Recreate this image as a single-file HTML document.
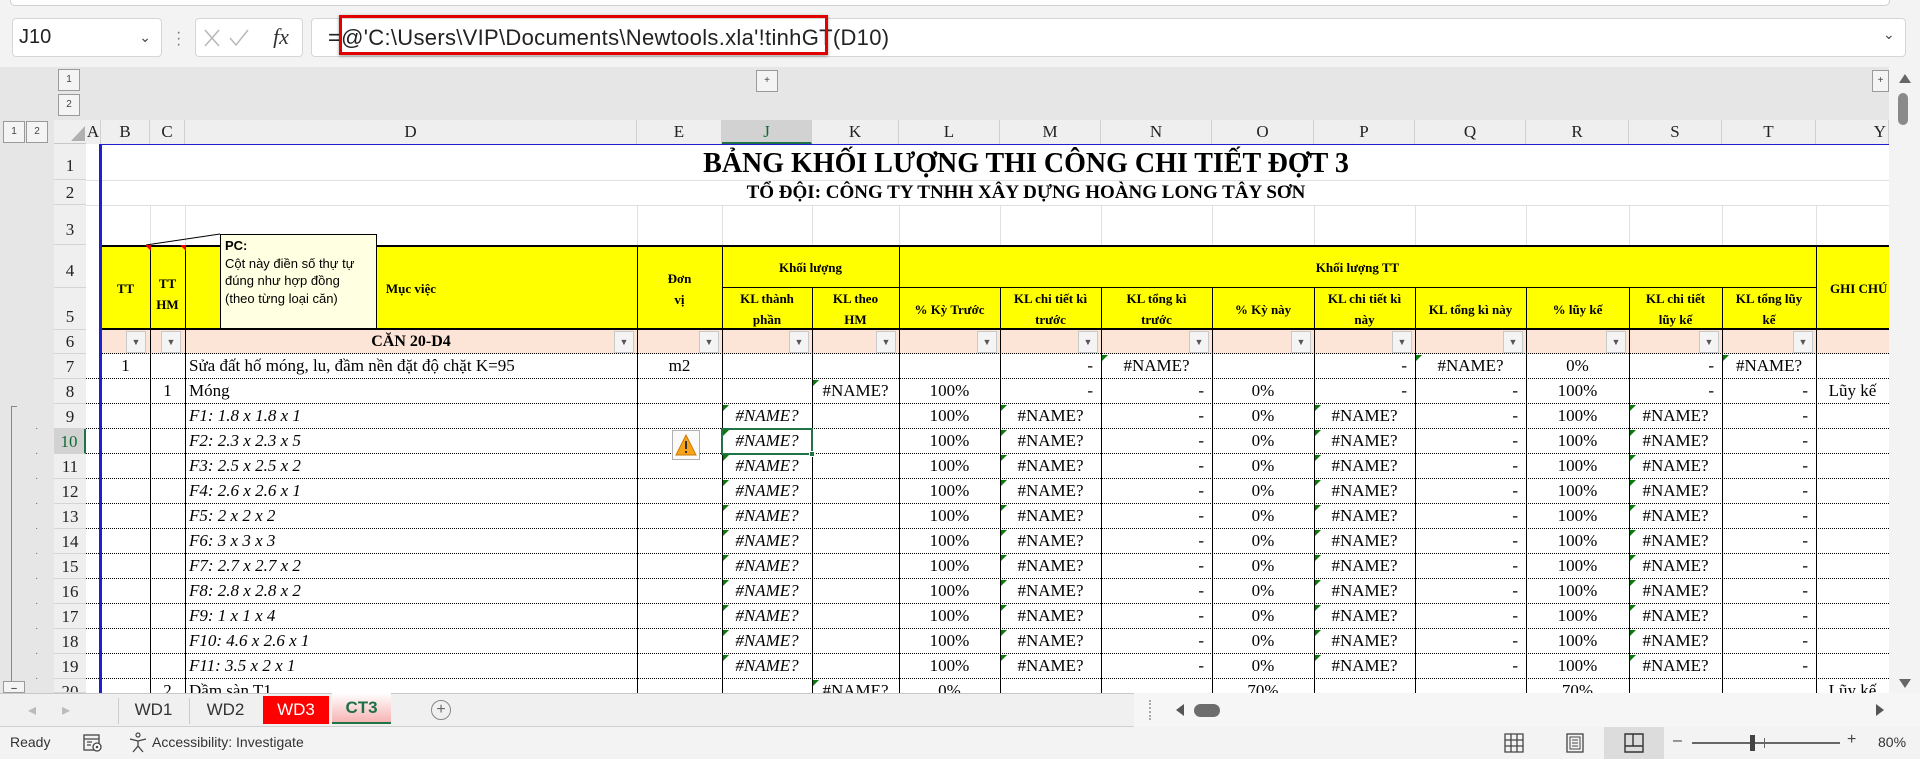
<!DOCTYPE html>
<html><head><meta charset="utf-8"><style>
*{box-sizing:border-box;margin:0;padding:0}
body{width:1920px;height:759px;overflow:hidden;background:#f3f3f3;position:relative;font-family:"Liberation Sans",sans-serif}
.a{position:absolute}
.sheet{position:absolute;left:86px;top:144px;width:1803px;height:549px;overflow:hidden;background:#fff}
.s{font-family:"Liberation Serif",serif;color:#000}
.r{position:absolute;left:-86px;width:1889px;height:25px;border-bottom:1px dotted #000;font-family:"Liberation Serif",serif;font-size:17px}
.c{position:absolute;top:0;height:24px;line-height:24px;text-align:center;white-space:nowrap}
.B{left:101px;width:49px}.C{left:150px;width:35px}.D{left:189px;width:448px;text-align:left}.E{left:637px;width:85px}
.J{left:722px;width:90px}.K{left:812px;width:87px}.L{left:899px;width:101px}.M{left:1000px;width:101px}
.N{left:1101px;width:111px}.O{left:1212px;width:102px}.P{left:1314px;width:101px}.Q{left:1415px;width:111px}
.R{left:1526px;width:103px}.S{left:1629px;width:93px}.T{left:1722px;width:94px}.Y{left:1816px;width:73px}
.rt{text-align:right;padding-right:8px}
.t::before{content:"";position:absolute;left:1px;top:1px;border-top:6px solid #0a7a0a;border-right:6px solid transparent}
.vl{position:absolute;width:1px;background:#000}
.rn{position:absolute;left:54px;width:32px;text-align:center;font-family:"Liberation Serif",serif;font-size:17px;color:#222;border-bottom:1px solid #d4d4d4;background:#efefef}
.ch{position:absolute;top:120px;height:24px;line-height:24px;text-align:center;font-family:"Liberation Serif",serif;font-size:17px;color:#222;border-right:1px solid #d0d0d0;background:#efefef}
.h{position:absolute;font-family:"Liberation Serif",serif;font-weight:bold;font-size:13px;text-align:center;display:flex;align-items:center;justify-content:center;line-height:21px}
.dd{position:absolute;top:2px;width:20px;height:22px;background:#f4f4f4;border:1px solid #c8c8c8;font-size:9px;line-height:20px;text-align:center;color:#555}
.ob{position:absolute;width:22px;height:22px;border:1px solid #9a9a9a;background:#f4f4f4;font-size:10px;text-align:center;line-height:20px;color:#444}
</style></head><body>
<div class="a" style="left:10px;top:-6px;width:1880px;height:12px;background:#fff;border:1px solid #d0d0d0;border-radius:5px"></div>
<div class="a" style="left:12px;top:18px;width:150px;height:39px;background:#fff;border:1px solid #d6d6d6;border-radius:4px;font-size:20px;line-height:37px;padding-left:6px;color:#222">J10<span class="a" style="right:10px;top:0;font-size:14px;color:#444">&#8964;</span></div>
<div class="a" style="left:176px;top:30px;color:#777;font-size:16px;line-height:6px">·<br>·<br>·</div>
<div class="a" style="left:195px;top:18px;width:108px;height:39px;background:#fff;border:1px solid #d6d6d6;border-radius:4px"></div>
<svg class="a" style="left:203px;top:28px" width="95" height="20"><path d="M2 2 L16 18 M16 2 L2 18" stroke="#b8b8b8" stroke-width="1.5"/><path d="M27 10 L33 17 L45 2" stroke="#b8b8b8" stroke-width="1.5" fill="none"/><text x="70" y="16" font-family="Liberation Serif" font-style="italic" font-size="22" fill="#333">fx</text></svg>
<div class="a" style="left:311px;top:18px;width:1595px;height:39px;background:#fff;border:1px solid #d6d6d6;border-radius:4px"></div>
<div class="a" style="left:328px;top:25px;font-size:22px;color:#222;white-space:nowrap;letter-spacing:0.3px">=@'C:\Users\VIP\Documents\Newtools.xla'!tinhGT(D10)</div>
<div class="a" style="left:339px;top:15px;width:489px;height:40px;border:3px solid #e00000;box-shadow:0 1px 3px rgba(0,0,0,.4)"></div>
<div class="a" style="left:1883px;top:26px;font-size:14px;color:#444">&#8964;</div>
<div class="a" style="left:0;top:67px;width:1889px;height:53px;background:#e6e6e6"></div>
<div class="a" style="left:0;top:120px;width:54px;height:573px;background:#e6e6e6"></div>
<div class="ob" style="left:58px;top:69px">1</div><div class="ob" style="left:58px;top:94px">2</div>
<div class="ob" style="left:756px;top:70px">+</div><div class="ob" style="left:1872px;top:70px;width:17px">+</div>
<div class="ob" style="left:3px;top:121px">1</div><div class="ob" style="left:26px;top:121px">2</div>
<div class="a" style="left:54px;top:120px;width:1835px;height:24px;background:#efefef;border-bottom:1px solid #c8c8c8"></div>
<svg class="a" style="left:70px;top:124px" width="16" height="18"><path d="M15 2 L15 17 L1 17 Z" fill="#b0b0b0"/></svg>
<div class="ch" style="left:86px;width:15px">A</div><div class="ch" style="left:101px;width:49px">B</div><div class="ch" style="left:150px;width:35px">C</div>
<div class="ch" style="left:185px;width:452px">D</div><div class="ch" style="left:637px;width:85px">E</div>
<div class="ch" style="left:722px;width:90px;background:#d2d2d2;border-bottom:2px solid #217346;color:#106b35">J</div>
<div class="ch" style="left:812px;width:87px">K</div><div class="ch" style="left:899px;width:101px">L</div><div class="ch" style="left:1000px;width:101px">M</div>
<div class="ch" style="left:1101px;width:111px">N</div><div class="ch" style="left:1212px;width:102px">O</div><div class="ch" style="left:1314px;width:101px">P</div>
<div class="ch" style="left:1415px;width:111px">Q</div><div class="ch" style="left:1526px;width:103px">R</div><div class="ch" style="left:1629px;width:93px">S</div>
<div class="ch" style="left:1722px;width:94px">T</div><div class="ch" style="left:1816px;width:73px;text-align:right;padding-right:2px">Y</div>
<div class="rn" style="top:144px;height:36px;line-height:44px">1</div>
<div class="rn" style="top:180px;height:25px;line-height:25px">2</div>
<div class="rn" style="top:205px;height:40px;line-height:50px">3</div>
<div class="rn" style="top:245px;height:43px;line-height:52px">4</div>
<div class="rn" style="top:288px;height:42px;line-height:58px">5</div>
<div class="rn" style="top:330px;height:24px;line-height:24px">6</div>
<div class="rn" style="top:354px;height:25px;line-height:25px">7</div>
<div class="rn" style="top:379px;height:25px;line-height:25px">8</div>
<div class="rn" style="top:404px;height:25px;line-height:25px">9</div>
<div class="rn" style="top:429px;height:25px;line-height:25px;background:#d2d2d2;color:#106b35;border-right:2px solid #217346">10</div>
<div class="rn" style="top:454px;height:25px;line-height:25px">11</div>
<div class="rn" style="top:479px;height:25px;line-height:25px">12</div>
<div class="rn" style="top:504px;height:25px;line-height:25px">13</div>
<div class="rn" style="top:529px;height:25px;line-height:25px">14</div>
<div class="rn" style="top:554px;height:25px;line-height:25px">15</div>
<div class="rn" style="top:579px;height:25px;line-height:25px">16</div>
<div class="rn" style="top:604px;height:25px;line-height:25px">17</div>
<div class="rn" style="top:629px;height:25px;line-height:25px">18</div>
<div class="rn" style="top:654px;height:25px;line-height:25px">19</div>
<div class="rn" style="top:679px;height:14px;line-height:25px;overflow:hidden">20</div>
<div class="a" style="left:11px;top:406px;width:1px;height:275px;background:#888"></div>
<div class="a" style="left:11px;top:406px;width:6px;height:1px;background:#888"></div>
<div class="a" style="left:35px;top:416px;color:#666;font-size:10px;line-height:25px">·<br>·<br>·<br>·<br>·<br>·<br>·<br>·<br>·<br>·<br>·</div>
<div class="a" style="left:3px;top:681px;width:22px;height:12px;border:1px solid #9a9a9a;background:#f4f4f4;font-size:10px;text-align:center;line-height:14px;overflow:hidden">–</div>

<div class="sheet">
 <div class="a" style="left:0;top:36px;width:1803px;height:1px;background:#e0e0e0"></div>
 <div class="a" style="left:0;top:61px;width:1803px;height:1px;background:#e0e0e0"></div>
 <div class="a" style="left:64px;top:61px;width:1px;height:40px;background:#e0e0e0"></div>
 <div class="a" style="left:99px;top:61px;width:1px;height:40px;background:#e0e0e0"></div>
 <div class="a" style="left:551px;top:61px;width:1px;height:40px;background:#e0e0e0"></div>
 <div class="a" style="left:636px;top:61px;width:1px;height:40px;background:#e0e0e0"></div>
 <div class="a" style="left:726px;top:61px;width:1px;height:40px;background:#e0e0e0"></div>
 <div class="a" style="left:813px;top:61px;width:1px;height:40px;background:#e0e0e0"></div>
 <div class="a" style="left:914px;top:61px;width:1px;height:40px;background:#e0e0e0"></div>
 <div class="a" style="left:1015px;top:61px;width:1px;height:40px;background:#e0e0e0"></div>
 <div class="a" style="left:1126px;top:61px;width:1px;height:40px;background:#e0e0e0"></div>
 <div class="a" style="left:1228px;top:61px;width:1px;height:40px;background:#e0e0e0"></div>
 <div class="a" style="left:1329px;top:61px;width:1px;height:40px;background:#e0e0e0"></div>
 <div class="a" style="left:1440px;top:61px;width:1px;height:40px;background:#e0e0e0"></div>
 <div class="a" style="left:1543px;top:61px;width:1px;height:40px;background:#e0e0e0"></div>
 <div class="a" style="left:1636px;top:61px;width:1px;height:40px;background:#e0e0e0"></div>
 <div class="a" style="left:1730px;top:61px;width:1px;height:40px;background:#e0e0e0"></div>
 <div class="a s" style="left:0;top:0;width:1880px;height:36px;text-align:center;font-weight:bold;font-size:28px;line-height:40px;padding-left:0">BẢNG KHỐI LƯỢNG THI CÔNG CHI TIẾT ĐỢT 3</div>
 <div class="a s" style="left:0;top:36px;width:1880px;height:25px;text-align:center;font-weight:bold;font-size:19px;line-height:25px">TỔ ĐỘI: CÔNG TY TNHH XÂY DỰNG HOÀNG LONG TÂY SƠN</div>
 <div class="a" style="left:15px;top:101px;width:1790px;height:85px;background:#ffff00;border-top:2px solid #000;border-bottom:2px solid #000"></div>
 <div class="a" style="left:636px;top:143px;width:1094px;height:1px;background:#000"></div>
 <div class="a" style="left:15px;top:186px;width:1790px;height:24px;background:#fce4d6;border-bottom:1px dotted #000"></div>
</div>
<div class="h" style="left:101px;top:247px;width:49px;height:83px">TT</div>
<div class="h" style="left:150px;top:247px;width:35px;height:83px;padding-top:10px">TT<br>HM</div>
<div class="h" style="left:185px;top:247px;width:452px;height:83px">Mục việc</div>
<div class="h" style="left:637px;top:247px;width:85px;height:83px">Đơn<br>vị</div>
<div class="h" style="left:722px;top:247px;width:177px;height:41px">Khối lượng</div>
<div class="h" style="left:899px;top:247px;width:917px;height:41px">Khối lượng TT</div>
<div class="h" style="left:1816px;top:247px;width:90px;height:83px;justify-content:flex-start;padding-left:14px">GHI CHÚ</div>
<div class="h" style="left:722px;top:288px;width:90px;height:42px">KL thành<br>phần</div>
<div class="h" style="left:812px;top:288px;width:87px;height:42px">KL theo<br>HM</div>
<div class="h" style="left:899px;top:288px;width:101px;height:42px">% Kỳ Trước</div>
<div class="h" style="left:1000px;top:288px;width:101px;height:42px">KL chi tiết kì<br>trước</div>
<div class="h" style="left:1101px;top:288px;width:111px;height:42px">KL tổng kì<br>trước</div>
<div class="h" style="left:1212px;top:288px;width:102px;height:42px">% Kỳ này</div>
<div class="h" style="left:1314px;top:288px;width:101px;height:42px">KL chi tiết kì<br>này</div>
<div class="h" style="left:1415px;top:288px;width:111px;height:42px">KL tổng kì này</div>
<div class="h" style="left:1526px;top:288px;width:103px;height:42px">% lũy kế</div>
<div class="h" style="left:1629px;top:288px;width:93px;height:42px">KL chi tiết<br>lũy kế</div>
<div class="h" style="left:1722px;top:288px;width:94px;height:42px">KL tổng lũy<br>kế</div>
<div class="a" style="left:1889px;top:247px;width:31px;height:83px;background:#f3f3f3"></div>
<div class="a s" style="left:185px;top:330px;width:452px;height:24px;line-height:24px;text-align:center;font-weight:bold;font-size:16px">CĂN 20-D4</div>
<div class="dd" style="left:126px;top:331px">▼</div><div class="dd" style="left:161px;top:331px">▼</div><div class="dd" style="left:614px;top:331px">▼</div>
<div class="dd" style="left:699px;top:331px">▼</div><div class="dd" style="left:789px;top:331px">▼</div><div class="dd" style="left:876px;top:331px">▼</div>
<div class="dd" style="left:977px;top:331px">▼</div><div class="dd" style="left:1078px;top:331px">▼</div><div class="dd" style="left:1189px;top:331px">▼</div>
<div class="dd" style="left:1291px;top:331px">▼</div><div class="dd" style="left:1392px;top:331px">▼</div><div class="dd" style="left:1503px;top:331px">▼</div>
<div class="dd" style="left:1606px;top:331px">▼</div><div class="dd" style="left:1699px;top:331px">▼</div><div class="dd" style="left:1793px;top:331px">▼</div>
<div class="a" style="left:86px;top:354px;width:1803px;height:339px;overflow:hidden">
<div style="position:absolute;left:0;top:0">
<div class="r" style="top:0"><span class="c B">1</span><span class="c D">Sửa đất hố móng, lu, đầm nền đặt độ chặt K=95</span><span class="c E">m2</span><span class="c M rt">-</span><span class="c N t">#NAME?</span><span class="c P rt">-</span><span class="c Q t">#NAME?</span><span class="c R">0%</span><span class="c S rt">-</span><span class="c T t">#NAME?</span></div>
<div class="r" style="top:25px"><span class="c C">1</span><span class="c D">Móng</span><span class="c K t">#NAME?</span><span class="c L">100%</span><span class="c M rt">-</span><span class="c N rt">-</span><span class="c O">0%</span><span class="c P rt">-</span><span class="c Q rt">-</span><span class="c R">100%</span><span class="c S rt">-</span><span class="c T rt">-</span><span class="c Y">Lũy kế</span></div>
<div class="r" style="top:50px"><i class="c D">F1: 1.8 x 1.8 x 1</i><i class="c J t">#NAME?</i><span class="c L">100%</span><span class="c M t">#NAME?</span><span class="c N rt">-</span><span class="c O">0%</span><span class="c P t">#NAME?</span><span class="c Q rt">-</span><span class="c R">100%</span><span class="c S t">#NAME?</span><span class="c T rt">-</span></div>
<div class="r" style="top:75px"><i class="c D">F2: 2.3 x 2.3 x 5</i><i class="c J t">#NAME?</i><span class="c L">100%</span><span class="c M t">#NAME?</span><span class="c N rt">-</span><span class="c O">0%</span><span class="c P t">#NAME?</span><span class="c Q rt">-</span><span class="c R">100%</span><span class="c S t">#NAME?</span><span class="c T rt">-</span></div>
<div class="r" style="top:100px"><i class="c D">F3: 2.5 x 2.5 x 2</i><i class="c J t">#NAME?</i><span class="c L">100%</span><span class="c M t">#NAME?</span><span class="c N rt">-</span><span class="c O">0%</span><span class="c P t">#NAME?</span><span class="c Q rt">-</span><span class="c R">100%</span><span class="c S t">#NAME?</span><span class="c T rt">-</span></div>
<div class="r" style="top:125px"><i class="c D">F4: 2.6 x 2.6 x 1</i><i class="c J t">#NAME?</i><span class="c L">100%</span><span class="c M t">#NAME?</span><span class="c N rt">-</span><span class="c O">0%</span><span class="c P t">#NAME?</span><span class="c Q rt">-</span><span class="c R">100%</span><span class="c S t">#NAME?</span><span class="c T rt">-</span></div>
<div class="r" style="top:150px"><i class="c D">F5: 2 x 2 x 2</i><i class="c J t">#NAME?</i><span class="c L">100%</span><span class="c M t">#NAME?</span><span class="c N rt">-</span><span class="c O">0%</span><span class="c P t">#NAME?</span><span class="c Q rt">-</span><span class="c R">100%</span><span class="c S t">#NAME?</span><span class="c T rt">-</span></div>
<div class="r" style="top:175px"><i class="c D">F6: 3 x 3 x 3</i><i class="c J t">#NAME?</i><span class="c L">100%</span><span class="c M t">#NAME?</span><span class="c N rt">-</span><span class="c O">0%</span><span class="c P t">#NAME?</span><span class="c Q rt">-</span><span class="c R">100%</span><span class="c S t">#NAME?</span><span class="c T rt">-</span></div>
<div class="r" style="top:200px"><i class="c D">F7: 2.7 x 2.7 x 2</i><i class="c J t">#NAME?</i><span class="c L">100%</span><span class="c M t">#NAME?</span><span class="c N rt">-</span><span class="c O">0%</span><span class="c P t">#NAME?</span><span class="c Q rt">-</span><span class="c R">100%</span><span class="c S t">#NAME?</span><span class="c T rt">-</span></div>
<div class="r" style="top:225px"><i class="c D">F8: 2.8 x 2.8 x 2</i><i class="c J t">#NAME?</i><span class="c L">100%</span><span class="c M t">#NAME?</span><span class="c N rt">-</span><span class="c O">0%</span><span class="c P t">#NAME?</span><span class="c Q rt">-</span><span class="c R">100%</span><span class="c S t">#NAME?</span><span class="c T rt">-</span></div>
<div class="r" style="top:250px"><i class="c D">F9: 1 x 1 x 4</i><i class="c J t">#NAME?</i><span class="c L">100%</span><span class="c M t">#NAME?</span><span class="c N rt">-</span><span class="c O">0%</span><span class="c P t">#NAME?</span><span class="c Q rt">-</span><span class="c R">100%</span><span class="c S t">#NAME?</span><span class="c T rt">-</span></div>
<div class="r" style="top:275px"><i class="c D">F10: 4.6 x 2.6 x 1</i><i class="c J t">#NAME?</i><span class="c L">100%</span><span class="c M t">#NAME?</span><span class="c N rt">-</span><span class="c O">0%</span><span class="c P t">#NAME?</span><span class="c Q rt">-</span><span class="c R">100%</span><span class="c S t">#NAME?</span><span class="c T rt">-</span></div>
<div class="r" style="top:300px"><i class="c D">F11: 3.5 x 2 x 1</i><i class="c J t">#NAME?</i><span class="c L">100%</span><span class="c M t">#NAME?</span><span class="c N rt">-</span><span class="c O">0%</span><span class="c P t">#NAME?</span><span class="c Q rt">-</span><span class="c R">100%</span><span class="c S t">#NAME?</span><span class="c T rt">-</span></div>
<div class="r" style="top:325px"><span class="c C">2</span><span class="c D">Dầm sàn T1</span><span class="c K t">#NAME?</span><span class="c L">0%</span><span class="c O">70%</span><span class="c R">70%</span><span class="c Y">Lũy kế</span></div>
</div></div>
<div class="vl" style="left:150px;top:245px;height:448px"></div><div class="vl" style="left:185px;top:245px;height:448px"></div>
<div class="vl" style="left:637px;top:245px;height:448px"></div><div class="vl" style="left:722px;top:245px;height:448px"></div>
<div class="vl" style="left:812px;top:288px;height:405px"></div><div class="vl" style="left:899px;top:245px;height:448px"></div>
<div class="vl" style="left:1000px;top:288px;height:405px"></div><div class="vl" style="left:1101px;top:288px;height:405px"></div>
<div class="vl" style="left:1212px;top:288px;height:405px"></div><div class="vl" style="left:1314px;top:288px;height:405px"></div>
<div class="vl" style="left:1415px;top:288px;height:405px"></div><div class="vl" style="left:1526px;top:288px;height:405px"></div>
<div class="vl" style="left:1629px;top:288px;height:405px"></div><div class="vl" style="left:1722px;top:288px;height:405px"></div>
<div class="vl" style="left:1816px;top:245px;height:448px"></div>
<div class="a" style="left:99px;top:144px;width:3px;height:549px;background:#1f1fd0"></div>
<div class="a" style="left:101px;top:144px;width:1788px;height:1px;background:#1f1fd0"></div>
<svg class="a" style="left:140px;top:230px" width="90" height="20"><path d="M6 15 L80 4" stroke="#000" stroke-width="1"/></svg>
<div class="a" style="left:145px;top:245px;border-top:6px solid #e00;border-left:6px solid transparent"></div>
<div class="a" style="left:180px;top:245px;border-top:6px solid #e00;border-left:6px solid transparent"></div>
<div class="a" style="left:220px;top:234px;width:157px;height:95px;background:#ffffe1;border:1px solid #000;font-size:13px;line-height:17.5px;padding:2px 4px;color:#000">
<b>PC:</b><br>Cột này điền số thự tự đúng như hợp đồng (theo từng loại căn)</div>
<div class="a" style="left:721px;top:428px;width:92px;height:27px;border:2px solid #217346"></div>
<div class="a" style="left:809px;top:451px;width:6px;height:6px;background:#217346;border:1px solid #fff"></div>
<div class="a" style="left:672px;top:430px;width:28px;height:30px;border:1px solid #b0b0b0;background:#fafafa"></div>
<svg class="a" style="left:675px;top:433px" width="22" height="24"><path d="M11 2 L21 22 L1 22 Z" fill="#f7a31c" stroke="#d07800" stroke-width="1"/><rect x="10" y="8" width="2" height="8" fill="#333"/><rect x="10" y="18" width="2" height="2" fill="#333"/></svg>
<div class="a" style="left:1889px;top:67px;width:31px;height:626px;background:#f3f3f3"></div>
<svg class="a" style="left:1897px;top:72px" width="16" height="12"><path d="M8 2 L14 11 L2 11 Z" fill="#666"/></svg>
<div class="a" style="left:1898px;top:93px;width:10px;height:32px;background:#8a8a8a;border-radius:5px"></div>
<svg class="a" style="left:1897px;top:678px" width="16" height="12"><path d="M2 1 L14 1 L8 10 Z" fill="#666"/></svg>
<div class="a" style="left:0;top:693px;width:1920px;height:34px;background:#f0f0f0;border-top:1px solid #c8c8c8;border-bottom:1px solid #d0d0d0"></div>
<div class="a" style="left:28px;top:700px;color:#bbb;font-size:16px">&#9666;</div><div class="a" style="left:62px;top:700px;color:#bbb;font-size:16px">&#9656;</div>
<div class="a" style="left:118px;top:698px;width:1px;height:26px;background:#ccc"></div>
<div class="a" style="left:118px;top:696px;width:71px;height:28px;font-size:17px;line-height:28px;text-align:center;color:#333">WD1</div>
<div class="a" style="left:189px;top:698px;width:1px;height:26px;background:#ccc"></div>
<div class="a" style="left:189px;top:696px;width:73px;height:28px;font-size:17px;line-height:28px;text-align:center;color:#333">WD2</div>
<div class="a" style="left:263px;top:696px;width:66px;height:28px;background:#ff0000;font-size:17px;line-height:28px;text-align:center;color:#fff">WD3</div>
<div class="a" style="left:332px;top:693px;width:59px;height:31px;background:linear-gradient(#fff,#f6b3b3);border-bottom:2px solid #217346;font-size:17px;font-weight:bold;line-height:30px;text-align:center;color:#1e7145">CT3</div>
<div class="a" style="left:431px;top:700px;width:20px;height:20px;border:1px solid #888;border-radius:50%;text-align:center;line-height:18px;color:#666;font-size:16px">+</div>
<div class="a" style="left:1134px;top:693px;width:786px;height:34px;background:#f6f6f6"></div>
<div class="a" style="left:1149px;top:700px;width:2px;height:20px;border-left:2px dotted #aaa"></div>
<svg class="a" style="left:1174px;top:703px" width="12" height="14"><path d="M10 1 L2 7 L10 13 Z" fill="#555"/></svg>
<div class="a" style="left:1194px;top:704px;width:26px;height:13px;background:#6d6d6d;border-radius:7px"></div>
<svg class="a" style="left:1874px;top:703px" width="12" height="14"><path d="M2 1 L10 7 L2 13 Z" fill="#555"/></svg>
<div class="a" style="left:10px;top:734px;font-size:14px;color:#333">Ready</div>
<svg class="a" style="left:82px;top:733px" width="22" height="20"><rect x="2" y="2" width="15" height="15" fill="none" stroke="#444" stroke-width="1.3"/><path d="M2 6 H17 M5 9 H10 M5 12 H9" stroke="#444" stroke-width="1.2"/><circle cx="15" cy="14" r="4" fill="#fff" stroke="#444" stroke-width="1.3"/><circle cx="15" cy="14" r="1.3" fill="#444"/></svg>
<svg class="a" style="left:127px;top:732px" width="22" height="22"><circle cx="11" cy="3" r="2" fill="none" stroke="#444" stroke-width="1.2"/><path d="M3 7 L11 9 L19 7 M11 9 L11 14 L6 20 M11 14 L16 20" stroke="#444" stroke-width="1.3" fill="none"/></svg>
<div class="a" style="left:152px;top:734px;font-size:14px;color:#333">Accessibility: Investigate</div>
<svg class="a" style="left:1504px;top:733px" width="20" height="20"><path d="M1 1 H19 V19 H1 Z M1 7 H19 M1 13 H19 M7 1 V19 M13 1 V19" stroke="#444" stroke-width="1.3" fill="none"/></svg>
<svg class="a" style="left:1565px;top:733px" width="20" height="20"><rect x="2" y="1" width="16" height="18" fill="none" stroke="#444" stroke-width="1.3"/><rect x="5" y="4" width="10" height="12" fill="none" stroke="#444"/><path d="M7 7 H13 M7 10 H13 M7 13 H13" stroke="#444"/></svg>
<div class="a" style="left:1604px;top:727px;width:60px;height:32px;background:#dcdcdc"></div>
<svg class="a" style="left:1624px;top:733px" width="20" height="20"><path d="M1 1 H19 V19 H1 Z M1 13 H19 M9 1 V13" stroke="#333" stroke-width="1.4" fill="none"/></svg>
<div class="a" style="left:1673px;top:732px;font-size:16px;color:#444">–</div>
<div class="a" style="left:1692px;top:742px;width:148px;height:2px;background:#666"></div>
<div class="a" style="left:1750px;top:735px;width:5px;height:16px;background:#444"></div>
<div class="a" style="left:1764px;top:738px;width:1px;height:10px;background:#666"></div>
<div class="a" style="left:1847px;top:731px;font-size:16px;color:#444">+</div>
<div class="a" style="left:1878px;top:734px;font-size:14px;color:#333">80%</div>
</body></html>
